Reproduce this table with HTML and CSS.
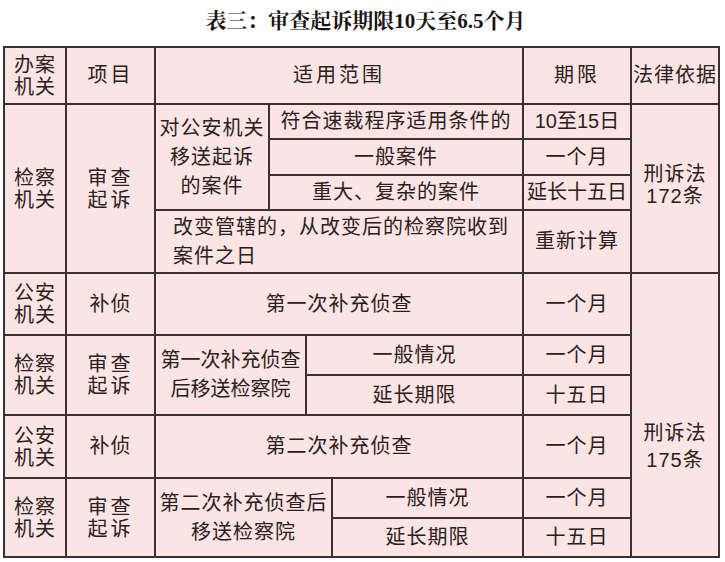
FILE: index.html
```html
<!DOCTYPE html>
<html lang="zh-CN">
<head>
<meta charset="utf-8">
<title>表三：审查起诉期限10天至6.5个月</title>
<link rel="stylesheet" href="styles.css">
</head>
<body>
<div class="title">表三：审查起诉期限10天至6.5个月</div>
<table class="grid">
  <colgroup>
    <col class="c1"><col class="c2"><col class="c3"><col class="c4"><col class="c5"><col class="c6"><col class="c7"><col class="c8">
  </colgroup>
  <tr class="h57">
    <td class="tight">办案<br>机关</td>
    <td class="wide">项目</td>
    <td colspan="4" class="wide">适用范围</td>
    <td class="wide">期限</td>
    <td>法律依据</td>
  </tr>
  <tr class="h35">
    <td rowspan="4" class="tight">检察<br>机关</td>
    <td rowspan="4" class="tight wide">审查<br>起诉</td>
    <td rowspan="3" class="multi">对公安机关<br>移送起诉<br>的案件</td>
    <td colspan="3">符合速裁程序适用条件的</td>
    <td class="num">10至15日</td>
    <td rowspan="4" class="tight law law1">刑诉法<br>172条</td>
  </tr>
  <tr class="h36">
    <td colspan="3">一般案件</td>
    <td>一个月</td>
  </tr>
  <tr class="h35">
    <td colspan="3">重大、复杂的案件</td>
    <td class="narrow">延长十五日</td>
  </tr>
  <tr class="h63">
    <td colspan="4" class="left multi">改变管辖的，从改变后的检察院收到<br>案件之日</td>
    <td>重新计算</td>
  </tr>
  <tr class="h62">
    <td class="tight">公安<br>机关</td>
    <td>补侦</td>
    <td colspan="4">第一次补充侦查</td>
    <td>一个月</td>
    <td rowspan="6" class="tight law law2">刑诉法<br>175条</td>
  </tr>
  <tr class="h40">
    <td rowspan="2" class="tight">检察<br>机关</td>
    <td rowspan="2" class="tight wide">审查<br>起诉</td>
    <td colspan="2" rowspan="2" class="multi narrow">第一次补充侦查<br>后移送检察院</td>
    <td colspan="2">一般情况</td>
    <td>一个月</td>
  </tr>
  <tr class="h40">
    <td colspan="2">延长期限</td>
    <td>十五日</td>
  </tr>
  <tr class="h63">
    <td class="tight">公安<br>机关</td>
    <td>补侦</td>
    <td colspan="4">第二次补充侦查</td>
    <td>一个月</td>
  </tr>
  <tr class="h40">
    <td rowspan="2" class="tight">检察<br>机关</td>
    <td rowspan="2" class="tight wide">审查<br>起诉</td>
    <td colspan="3" rowspan="2" class="multi">第二次补充侦查后<br>移送检察院</td>
    <td>一般情况</td>
    <td>一个月</td>
  </tr>
  <tr class="h39">
    <td>延长期限</td>
    <td>十五日</td>
  </tr>
</table>
</body>
</html>
```
FILE: styles.css
```css
html, body {
  margin: 0;
  padding: 0;
  background: #ffffff;
}

body {
  width: 725px;
  height: 562px;
  overflow: hidden;
  color: #2b2020;
  font-family: "Liberation Sans", "Noto Sans CJK SC", sans-serif;
}

.title {
  height: 42px;
  line-height: 42px;
  margin-bottom: 4px;
  padding-left: 6px;
  text-align: center;
  font-family: "Liberation Serif", "Noto Serif CJK SC", "Noto Sans CJK SC", serif;
  font-weight: bold;
  font-size: 21px;
  color: #1a1414;
  letter-spacing: 0;
}

.grid {
  margin-left: 3px;
  width: 717px;
  table-layout: fixed;
  border-collapse: collapse;
  background: #fbe4e4;
  border: 2px solid #3f3030;
}

.grid td {
  border: 2px solid #3f3030;
  padding: 0;
  text-align: center;
  vertical-align: middle;
  font-size: 20px;
  line-height: 23px;
  letter-spacing: 1px;
  white-space: nowrap;
  overflow: hidden;
}

.c1 { width: 62px; }
.c2 { width: 89px; }
.c3 { width: 114px; }
.c4 { width: 37px; }
.c5 { width: 26px; }
.c6 { width: 191px; }
.c7 { width: 108px; }
.c8 { width: 88px; }

.h57 { height: 57px; }
.h35 { height: 35px; }
.h36 { height: 36px; }
.h39 { height: 39px; }
.h40 { height: 40px; }
.h62 { height: 62px; }
.h63 { height: 63px; }

.grid td.tight {
  line-height: 22px;
}

.grid td.wide {
  letter-spacing: 3px;
}

.grid td.multi {
  line-height: 29px;
}

.grid td.left {
  text-align: left;
  padding-left: 17px;
}

.grid td.narrow {
  letter-spacing: 0;
}

.grid td.num {
  letter-spacing: 0;
}

.grid td.law1 {
  padding-bottom: 8px;
}

.grid td.law2 {
  line-height: 27px;
  padding-top: 64px;
}
```
